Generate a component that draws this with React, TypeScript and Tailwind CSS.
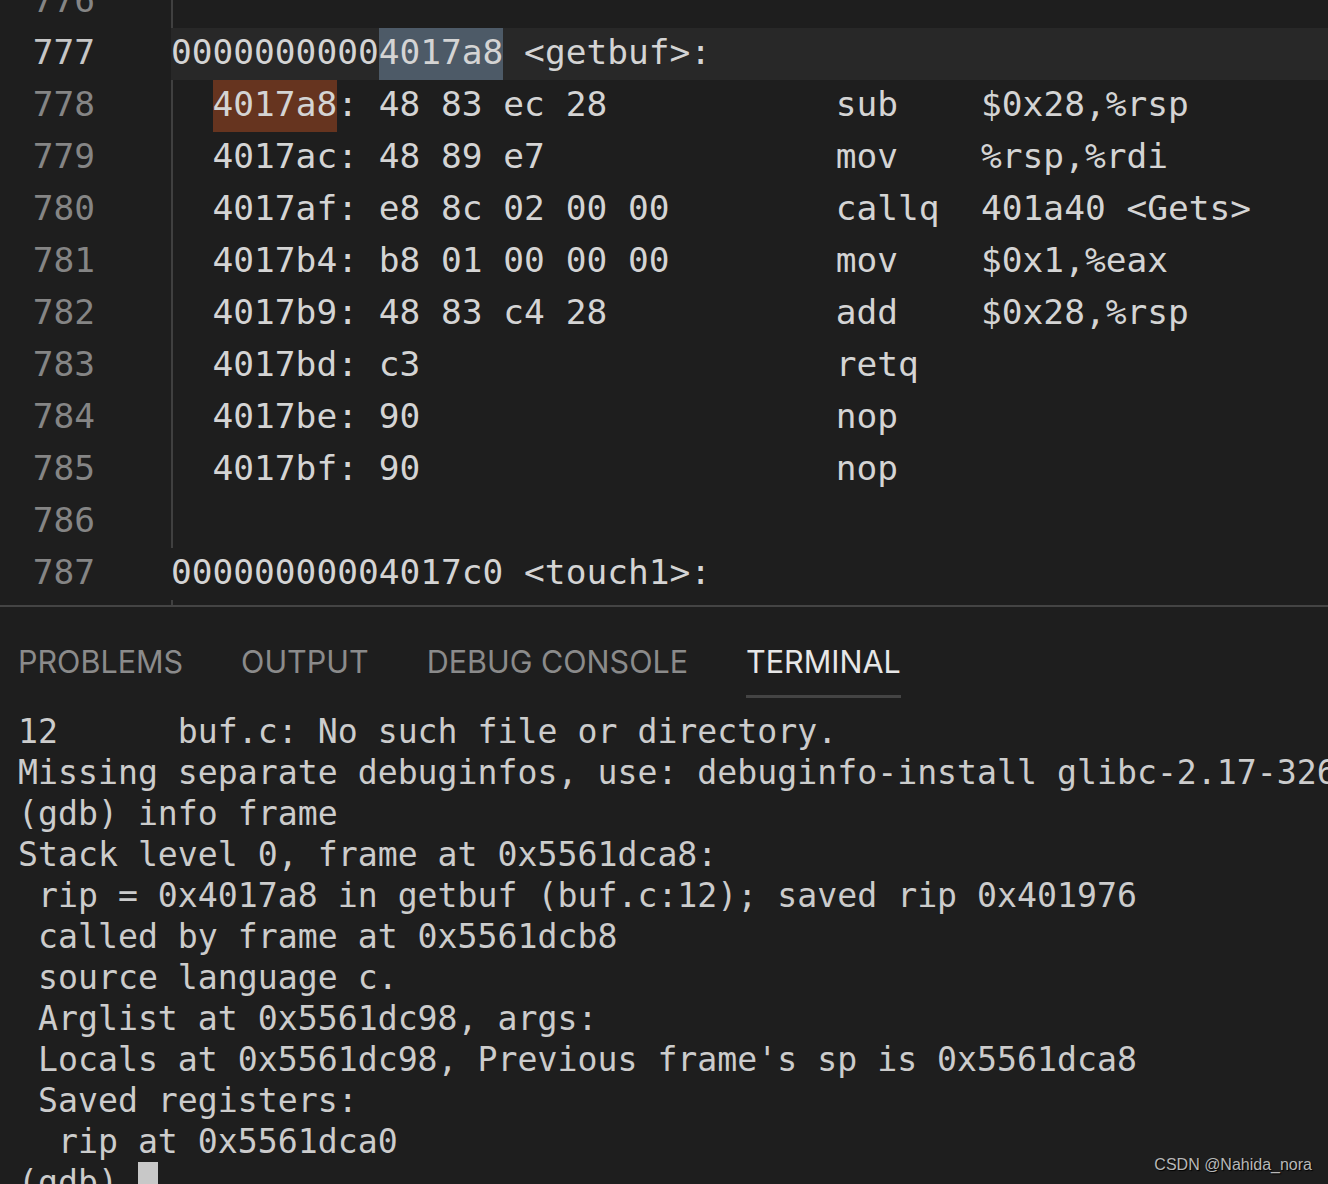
import React from "react";

const mono = { fontFamily: '"DejaVu Sans Mono", "Liberation Mono", monospace' };

function ins(addr: string, bytes: string, mnem = "", ops = "") {
  return "  " + addr + ": " + bytes.padEnd(22) + mnem.padEnd(7) + ops;
}

type Row = { n: number; text: string; guide: boolean; kind?: "current" | "brown" };

const rows: Row[] = [
  { n: 776, text: "", guide: true },
  { n: 777, text: "00000000004017a8 <getbuf>:", guide: false, kind: "current" },
  { n: 778, text: ins("4017a8", "48 83 ec 28", "sub", "$0x28,%rsp"), guide: true, kind: "brown" },
  { n: 779, text: ins("4017ac", "48 89 e7", "mov", "%rsp,%rdi"), guide: true },
  { n: 780, text: ins("4017af", "e8 8c 02 00 00", "callq", "401a40 <Gets>"), guide: true },
  { n: 781, text: ins("4017b4", "b8 01 00 00 00", "mov", "$0x1,%eax"), guide: true },
  { n: 782, text: ins("4017b9", "48 83 c4 28", "add", "$0x28,%rsp"), guide: true },
  { n: 783, text: ins("4017bd", "c3", "retq"), guide: true },
  { n: 784, text: ins("4017be", "90", "nop"), guide: true },
  { n: 785, text: ins("4017bf", "90", "nop"), guide: true },
  { n: 786, text: "", guide: true },
  { n: 787, text: "00000000004017c0 <touch1>:", guide: false },
  { n: 788, text: "", guide: true },
];

const term = [
  "12      buf.c: No such file or directory.",
  "Missing separate debuginfos, use: debuginfo-install glibc-2.17-326.el7_9.x86_64",
  "(gdb) info frame",
  "Stack level 0, frame at 0x5561dca8:",
  " rip = 0x4017a8 in getbuf (buf.c:12); saved rip 0x401976",
  " called by frame at 0x5561dcb8",
  " source language c.",
  " Arglist at 0x5561dc98, args: ",
  " Locals at 0x5561dc98, Previous frame's sp is 0x5561dca8",
  " Saved registers:",
  "  rip at 0x5561dca0",
];

const hl = "inline-block h-[52px] leading-[48px] align-top";

function CodeText({ row }: { row: Row }) {
  if (row.kind === "current") {
    return (
      <>
        <span>0000000000</span>
        <span className={hl + " bg-[#4d5a67]"}>4017a8</span>
        <span>{" <getbuf>:"}</span>
      </>
    );
  }
  if (row.kind === "brown") {
    return (
      <>
        <span>{"  "}</span>
        <span className={hl + " bg-[#66341f]"}>4017a8</span>
        <span>{row.text.slice(8)}</span>
      </>
    );
  }
  return <>{row.text}</>;
}

export default function App() {
  return (
    <div className="relative h-[1184px] w-[1328px] overflow-hidden bg-[#1e1e1e]">
      {/* Editor */}
      <div className="h-[607px] overflow-hidden border-b-2 border-[#444444]" style={mono}>
        <div className="mt-[-24px]">
          {rows.map((r) => (
            <div key={r.n} className="flex h-[52px] overflow-hidden text-[34.5px] leading-[48px]">
              <div
                className={
                  "w-[171px] shrink-0 pr-[76px] text-right " +
                  (r.kind === "current" ? "text-[#c6c6c6]" : "text-[#858585]")
                }
              >
                {r.n}
              </div>
              <div
                className={
                  "flex-1 whitespace-pre text-[#d4d4d4] " +
                  (r.kind === "current" ? "bg-[#282828] " : "") +
                  (r.guide ? "shadow-[inset_2px_0_0_#404040]" : "")
                }
              >
                <CodeText row={r} />
              </div>
            </div>
          ))}
        </div>
      </div>

      {/* Panel */}
      <div className="pl-[18px]">
        <div
          className="flex gap-[58px] text-[30.5px] leading-[36px]"
          style={{ fontFamily: 'Inter, "Noto Sans", sans-serif' }}
        >
          {["PROBLEMS", "OUTPUT", "DEBUG CONSOLE", "TERMINAL"].map((t) => (
            <div
              key={t}
              className={
                "border-b-[3px] pt-[37px] pb-[15px] " +
                (t === "TERMINAL"
                  ? "border-[#444444] text-[#e7e7e7]"
                  : "border-transparent text-[#8b8b8b]")
              }
            >
              {t}
            </div>
          ))}
        </div>
        <div
          className="pt-[13px] text-[33.2px] leading-[41px] text-[#cccccc] whitespace-pre overflow-hidden"
          style={mono}
        >
          {term.map((l, i) => (
            <div key={i}>{l}</div>
          ))}
          <div>
            {"(gdb) "}
            <span className="inline-block h-[41px] w-[20px] bg-[#c8c8c8] align-top" />
          </div>
        </div>
      </div>

      {/* Watermark */}
      <div
        className="absolute right-[16px] bottom-[10px] text-[16px] leading-[18px] text-[#b8b8b8] [text-shadow:1px_1px_1px_#000]"
        style={{ fontFamily: '"Liberation Sans", Arial, sans-serif' }}
      >
        CSDN @Nahida_nora
      </div>
    </div>
  );
}
